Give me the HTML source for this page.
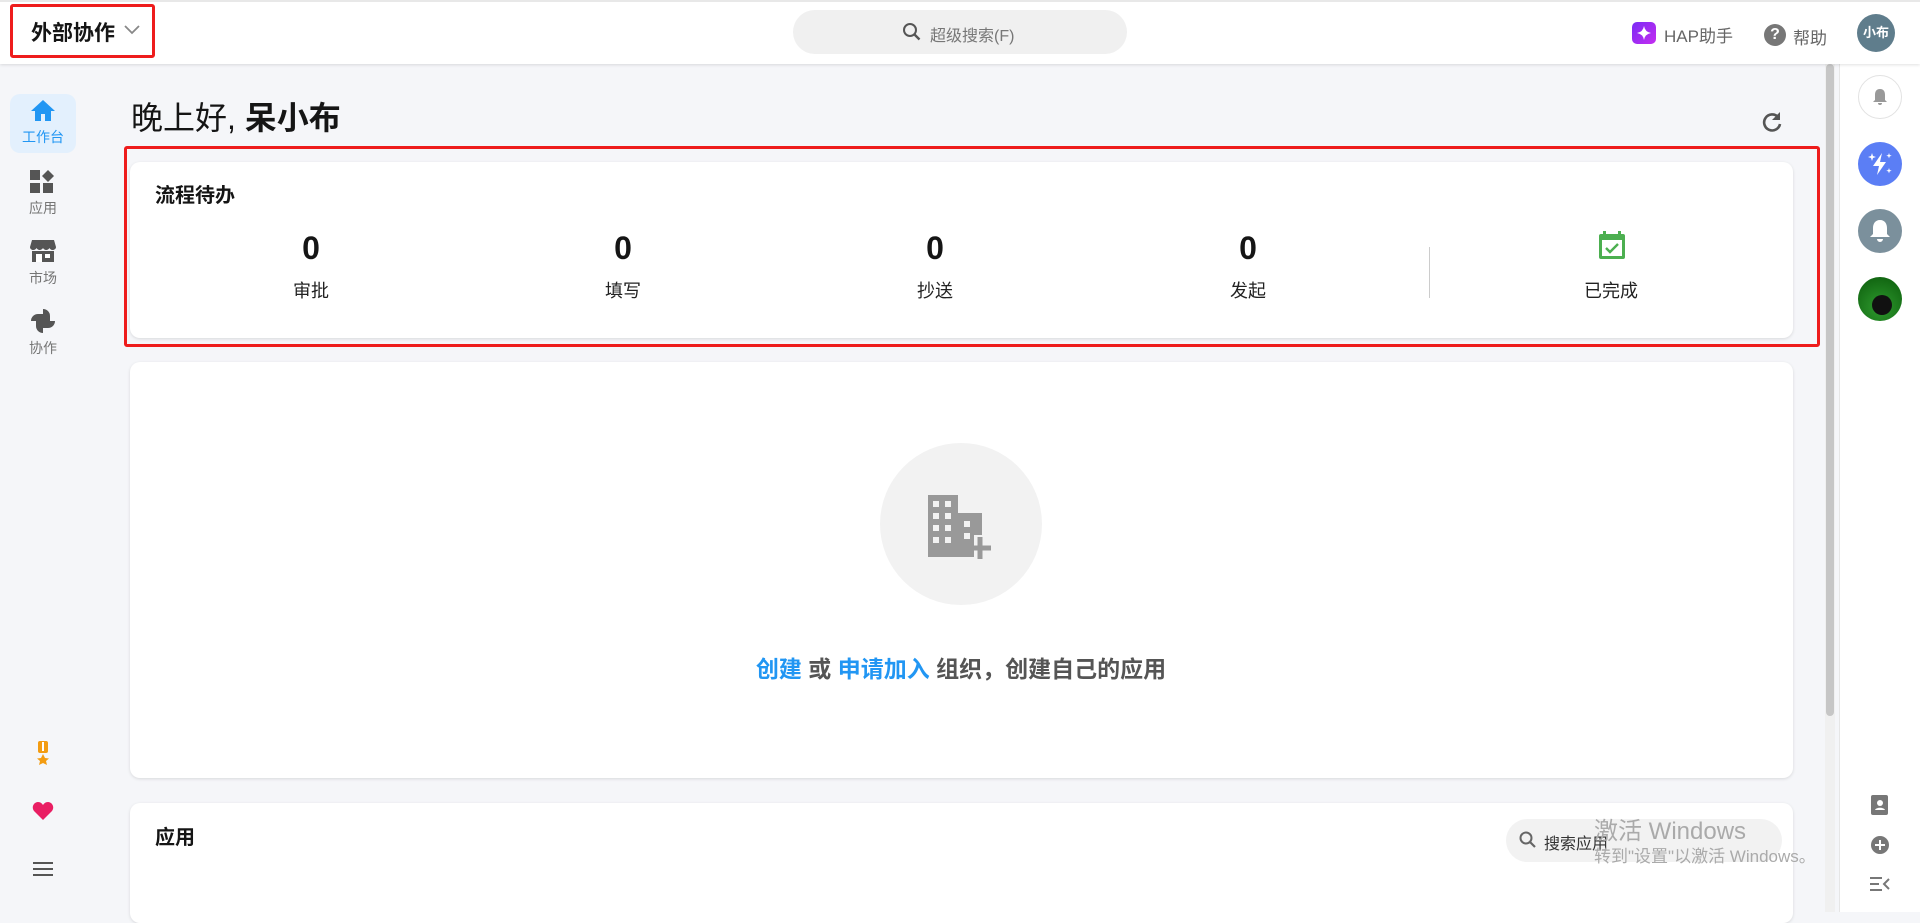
<!DOCTYPE html>
<html><head><meta charset="utf-8"><style>
*{margin:0;padding:0;box-sizing:border-box}
body{width:1920px;height:912px;overflow:hidden;background:#f5f6f9;font-family:"Liberation Sans","Noto Sans CJK SC",sans-serif;position:relative;color:#151515}
.a{position:absolute}
.top{left:0;top:0;width:1920px;height:64px;background:#fff;box-shadow:0 1px 3px rgba(0,0,0,.12);border-top:2px solid #e8e8e8;z-index:2}
.card{background:#fff;border-radius:10px;box-shadow:0 1px 3px rgba(0,0,0,.12)}
.nav{left:0;width:86px;text-align:center;font-size:14px;color:#757575}
.num{font-size:32px;font-weight:bold;text-align:center;width:200px;margin-left:-100px}
.lbl{font-size:18px;text-align:center;width:200px;margin-left:-100px;color:#222}
.rc{width:44px;height:44px;border-radius:50%;left:1858px}
</style></head><body>
<div class="a top">
 <div class="a" style="left:10px;top:2px;width:145px;height:54px;border:3px solid #ee1c1c;border-radius:3px"></div>
 <div class="a" style="left:31px;top:15px;font-size:21px;font-weight:bold">外部协作</div>
 <svg class="a" style="left:124px;top:23px" width="16" height="10"><path d="M1 1l7 7 7-7" fill="none" stroke="#888" stroke-width="1.8"/></svg>
 <div class="a" style="left:793px;top:8px;width:334px;height:44px;background:#f0f0f0;border-radius:22px"></div>
 <svg class="a" style="left:902px;top:20px" width="20" height="20"><circle cx="8" cy="8" r="6" fill="none" stroke="#555" stroke-width="2"/><path d="M12.5 12.5l5 5" stroke="#555" stroke-width="2.4"/></svg>
 <div class="a" style="left:930px;top:20px;font-size:16px;color:#777">超级搜索(F)</div>
 <div class="a" style="left:1632px;top:20px;width:24px;height:22px;border-radius:5px;background:linear-gradient(135deg,#7a2cf5,#c52df0)"></div>
 <svg class="a" style="left:1636px;top:23px" width="16" height="16"><path d="M8 1Q9 7 15 8Q9 9 8 15Q7 9 1 8Q7 7 8 1Z" fill="#fff"/></svg>
 <div class="a" style="left:1664px;top:20px;font-size:17px;color:#666">HAP助手</div>
 <div class="a" style="left:1764px;top:22px;width:22px;height:22px;border-radius:50%;background:#777;color:#fff;font-weight:bold;font-size:16px;text-align:center;line-height:22px">?</div>
 <div class="a" style="left:1793px;top:22px;font-size:17px;color:#666">帮助</div>
 <div class="a" style="left:1857px;top:12px;width:38px;height:38px;border-radius:50%;background:#5f7d8c;color:#fff;font-size:13px;font-weight:bold;text-align:center;line-height:38px">小布</div>
</div>
<div class="a" style="left:10px;top:94px;width:66px;height:59px;border-radius:10px;background:#e3f0fd"></div>
<svg class="a" style="left:30px;top:99px" width="26" height="24"><path d="M13 1L1 12h4v10h6v-7h4v7h6V12h4z" fill="#2196f3"/></svg>
<div class="a nav" style="top:127px;color:#2196f3">工作台</div>
<svg class="a" style="left:30px;top:170px" width="26" height="24"><rect x="0" y="0" width="10" height="10" fill="#555"/><rect x="0" y="13" width="10" height="10" fill="#555"/><rect x="13" y="13" width="10" height="10" fill="#555"/><path d="M18 0l6 6-6 6-6-6z" fill="#555"/></svg>
<div class="a nav" style="top:198px">应用</div>
<svg class="a" style="left:30px;top:239px" width="26" height="24"><path d="M2 1h22l2 7c0 2-2 3-3.5 3S20 10 19.5 9c-.5 1-2 2-3.3 2S13.5 10 13 9c-.5 1-2 2-3.3 2S7 10 6.5 9C6 10 4.8 11 3.3 11S0 10 0 8z M2 12h22v11H2z" fill="#555"/><rect x="6" y="15" width="6" height="8" fill="#fff"/><rect x="15" y="15" width="5" height="4" fill="#fff"/></svg>
<div class="a nav" style="top:268px">市场</div>
<svg class="a" style="left:30px;top:308px" width="26" height="26"><path d="M13 13V1a7 7 0 0 1 7 7v5zM13 13h12a7 7 0 0 1-7 7h-5zM13 13v12a7 7 0 0 1-7-7v-5zM13 13H1a7 7 0 0 1 7-7h5z" fill="#555"/></svg>
<div class="a nav" style="top:338px">协作</div>
<svg class="a" style="left:33px;top:740px" width="20" height="26"><rect x="5" y="1" width="10" height="12" rx="2" fill="#f39c12"/><rect x="9" y="2" width="2" height="9" fill="#fff"/><path d="M10 14l2 4 4 .5-3 2.5 1 4-4-2-4 2 1-4-3-2.5 4-.5z" fill="#f39c12"/></svg>
<svg class="a" style="left:32px;top:801px" width="22" height="20"><path d="M11 19L2 10C-1 6 2 1 6 1c2.5 0 4 1.5 5 3 1-1.5 2.5-3 5-3 4 0 7 5 4 9z" fill="#e91e63"/></svg>
<svg class="a" style="left:33px;top:861px" width="20" height="16"><path d="M0 2h20M0 8h20M0 14h20" stroke="#555" stroke-width="2"/></svg>
<div class="a" style="left:131px;top:93px;font-size:32px">晚上好, <b>呆小布</b></div>
<svg class="a" style="left:1761px;top:111px" width="22" height="22"><path d="M17 6A8 8 0 1 0 19 13" fill="none" stroke="#555" stroke-width="2.6"/><path d="M19 1v8h-8z" fill="#555"/></svg>
<div class="a" style="left:124px;top:146px;width:1696px;height:201px;border:3px solid #ee1c1c;border-radius:3px;z-index:1"></div>
<div class="a card" style="left:130px;top:162px;width:1663px;height:176px"></div>
<div class="a" style="left:155px;top:179px;font-size:20px;font-weight:bold">流程待办</div>
<div class="a num" style="left:311px;top:230px">0</div><div class="a lbl" style="left:311px;top:277px">审批</div>
<div class="a num" style="left:623px;top:230px">0</div><div class="a lbl" style="left:623px;top:277px">填写</div>
<div class="a num" style="left:935px;top:230px">0</div><div class="a lbl" style="left:935px;top:277px">抄送</div>
<div class="a num" style="left:1248px;top:230px">0</div><div class="a lbl" style="left:1248px;top:277px">发起</div>
<div class="a" style="left:1429px;top:247px;width:1px;height:51px;background:#ccc"></div>
<svg class="a" style="left:1598px;top:230px" width="28" height="30"><rect x="1" y="4" width="26" height="25" rx="2" fill="#4caf50"/><rect x="4" y="10" width="20" height="16" fill="#fff"/><rect x="5" y="1" width="3" height="5" fill="#4caf50"/><rect x="20" y="1" width="3" height="5" fill="#4caf50"/><path d="M8 18l4 4 8-8" fill="none" stroke="#4caf50" stroke-width="2.4"/></svg>
<div class="a lbl" style="left:1611px;top:277px">已完成</div>
<div class="a card" style="left:130px;top:362px;width:1663px;height:416px"></div>
<div class="a" style="left:880px;top:443px;width:162px;height:162px;border-radius:50%;background:#f2f2f2"></div>
<svg class="a" style="left:926px;top:493px" width="76" height="68"><path d="M2 2h30v62H2z" fill="#999"/><path d="M32 20h24v22h-8v22H32z" fill="#999"/><g fill="#f2f2f2"><rect x="7" y="8" width="6" height="6"/><rect x="19" y="8" width="6" height="6"/><rect x="7" y="20" width="6" height="6"/><rect x="19" y="20" width="6" height="6"/><rect x="7" y="32" width="6" height="6"/><rect x="19" y="32" width="6" height="6"/><rect x="7" y="44" width="6" height="6"/><rect x="19" y="44" width="6" height="6"/><rect x="38" y="28" width="6" height="6"/><rect x="38" y="40" width="6" height="6"/></g><path d="M54 44v22M43 55h22" stroke="#999" stroke-width="5"/></svg>
<div class="a" style="left:0;width:1922px;top:650px;text-align:center;font-size:23px;font-weight:bold;color:#555"><span style="color:#2196f3">创建</span> 或 <span style="color:#2196f3">申请加入</span> 组织，创建自己的应用</div>
<div class="a card" style="left:130px;top:803px;width:1663px;height:120px"></div>
<div class="a" style="left:155px;top:821px;font-size:20px;font-weight:bold">应用</div>
<div class="a" style="left:1506px;top:819px;width:276px;height:43px;border-radius:22px;background:#f2f2f2"></div>
<svg class="a" style="left:1519px;top:831px" width="18" height="18"><circle cx="7" cy="7" r="5.5" fill="none" stroke="#666" stroke-width="2"/><path d="M11 11l5 5" stroke="#666" stroke-width="2.2"/></svg>
<div class="a" style="left:1544px;top:830px;font-size:16px;color:#333">搜索应用</div>
<div class="a" style="left:1594px;top:811px;font-size:24px;color:#aaa">激活 Windows</div>
<div class="a" style="left:1594px;top:842px;font-size:17px;color:#aaa">转到"设置"以激活 Windows。</div>
<div class="a" style="left:1825px;top:64px;width:10px;height:848px;background:#f0f0f0"></div>
<div class="a" style="left:1826px;top:64px;width:8px;height:652px;background:#c6c6c6;border-radius:4px"></div>
<div class="a" style="left:1839px;top:64px;width:81px;height:848px;background:#fff;border-left:1px solid #e6e6e6"></div>
<div class="a rc" style="top:75px;border:1px solid #e2e2e2;background:#fff"></div>
<svg class="a" style="left:1871px;top:88px" width="18" height="18"><path d="M9 1c-4 0-5 3-5 6v5l-2 2h14l-2-2V7c0-3-1-6-5-6zM7 15h4a2 2 0 0 1-4 0z" fill="#999"/></svg>
<div class="a rc" style="top:142px;background:#5b7ef5"></div>
<svg class="a" style="left:1866px;top:150px" width="28" height="28"><path d="M16 3L7 16h6l-2 9 9-13h-6z" fill="#fff"/><path d="M6 3l1 3 3 1-3 1-1 3-1-3-3-1 3-1zM23 3l.7 2 2 .7-2 .7-.7 2-.7-2-2-.7 2-.7zM23 18l.7 2 2 .7-2 .7-.7 2-.7-2-2-.7 2-.7z" fill="#fff"/></svg>
<div class="a rc" style="top:209px;background:#7b909c"></div>
<svg class="a" style="left:1867px;top:218px" width="26" height="26"><path d="M13 2c-5 0-7 4-7 8v6l-3 3h20l-3-3v-6c0-4-2-8-7-8zM10 21h6a3 3 0 0 1-6 0z" fill="#fff"/></svg>
<div class="a rc" style="top:277px;background:radial-gradient(circle at 50% 70%,#2e9a2e,#0b5a0b)"></div>
<div class="a" style="left:1872px;top:295px;width:20px;height:20px;border-radius:50%;background:#111"></div>
<svg class="a" style="left:1870px;top:795px" width="20" height="20"><rect x="1" y="0" width="17" height="20" rx="2" fill="#777"/><circle cx="10" cy="8" r="3" fill="#fff"/><path d="M5 15c1-3 9-3 10 0z" fill="#fff"/></svg>
<svg class="a" style="left:1870px;top:835px" width="20" height="20"><circle cx="10" cy="10" r="9" fill="#777"/><path d="M10 5v10M5 10h10" stroke="#fff" stroke-width="2"/></svg>
<svg class="a" style="left:1870px;top:876px" width="20" height="16"><path d="M0 2h12M0 8h9M0 14h12M19 3l-5 5 5 5" stroke="#777" stroke-width="2" fill="none"/></svg>
</body></html>
